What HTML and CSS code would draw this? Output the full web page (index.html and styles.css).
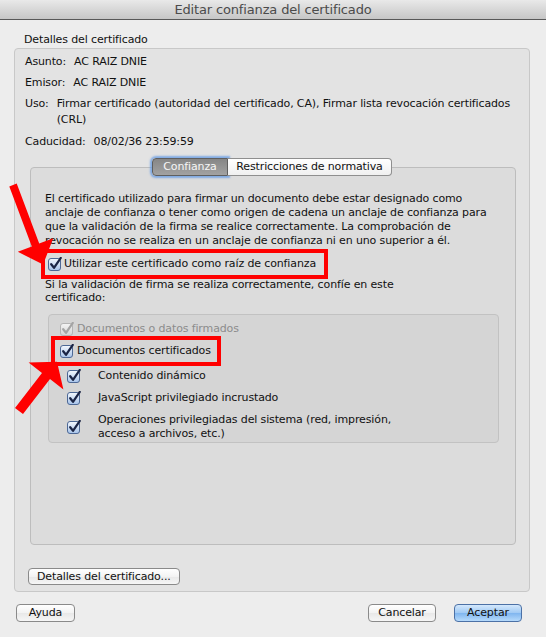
FILE: index.html
```html
<!DOCTYPE html>
<html lang="es">
<head>
<meta charset="utf-8">
<title>Editar confianza del certificado</title>
<link rel="stylesheet" href="styles.css">
</head>
<body>
<svg class="defs" aria-hidden="true">
	<defs>
		<linearGradient id="cb-blue" x1="0" y1="0" x2="0" y2="1">
			<stop offset="0" stop-color="#f4f8fd"/>
			<stop offset="1" stop-color="#a6c3ea"/>
		</linearGradient>
		<linearGradient id="cb-grey" x1="0" y1="0" x2="0" y2="1">
			<stop offset="0" stop-color="#f4f4f4"/>
			<stop offset="1" stop-color="#d4d4d4"/>
		</linearGradient>
	</defs>
	<symbol id="cb-on" viewBox="0 0 14 14">
		<rect x="0.5" y="1.5" width="12" height="12" rx="2.5" fill="url(#cb-blue)" stroke="#4d6895"/>
		<path d="M3.2 7.2 L6 10.8 L12.8 0.9" fill="none" stroke="#1a2444" stroke-width="2.2" stroke-linecap="round" stroke-linejoin="round"/>
	</symbol>
	<symbol id="cb-dis" viewBox="0 0 14 14">
		<rect x="0.5" y="1.5" width="12" height="12" rx="2.5" fill="url(#cb-grey)" stroke="#b4b4b4"/>
		<path d="M3.2 7.2 L6 10.8 L12.8 0.9" fill="none" stroke="#a4a4a4" stroke-width="2.2" stroke-linecap="round" stroke-linejoin="round"/>
	</symbol>
</svg>

<div class="window">

	<div class="titlebar">Editar confianza del certificado</div>

	<div class="group-label">Detalles del certificado</div>

	<div class="group">
		<div class="field"><span>Asunto:</span><span>AC RAIZ DNIE</span></div>
		<div class="field"><span>Emisor:</span><span>AC RAIZ DNIE</span></div>
		<div class="field wrap"><span>Uso:</span><span>Firmar certificado (autoridad del certificado, CA), Firmar lista revocación certificados (CRL)</span></div>
		<div class="field"><span>Caducidad:</span><span>08/02/36 23:59:59</span></div>

		<div class="tabs">
			<span class="tab selected">Confianza</span><span class="tab other">Restricciones de normativa</span>
		</div>

		<div class="panel">
			<p class="intro">El certificado utilizado para firmar un documento debe estar designado como anclaje de confianza o tener como origen de cadena un anclaje de confianza para que la validación de la firma se realice correctamente. La comprobación de revocación no se realiza en un anclaje de confianza ni en uno superior a él.</p>

			<div class="check root marked">
				<svg class="cb"><use href="#cb-on"/></svg>
				<span>Utilizar este certificado como raíz de confianza</span>
			</div>

			<p class="note">Si la validación de firma se realiza correctamente, confíe en este certificado:</p>

			<div class="subgroup">
				<div class="check top disabled">
					<svg class="cb"><use href="#cb-dis"/></svg>
					<span>Documentos o datos firmados</span>
				</div>
				<div class="check top marked">
					<svg class="cb"><use href="#cb-on"/></svg>
					<span>Documentos certificados</span>
				</div>
				<div class="sub">
					<svg class="cb"><use href="#cb-on"/></svg>
					<span>Contenido dinámico</span>
				</div>
				<div class="sub">
					<svg class="cb"><use href="#cb-on"/></svg>
					<span>JavaScript privilegiado incrustado</span>
				</div>
				<div class="sub">
					<svg class="cb"><use href="#cb-on"/></svg>
					<span>Operaciones privilegiadas del sistema (red, impresión, acceso a archivos, etc.)</span>
				</div>
			</div>
		</div>

		<button class="btn details">Detalles del certificado...</button>
	</div>

	<div class="footer">
		<button class="btn help">Ayuda</button>
		<span class="spacer"></span>
		<button class="btn wide">Cancelar</button>
		<button class="btn wide default">Aceptar</button>
	</div>

	<!-- red annotation arrows -->
	<svg class="annot" viewBox="0 0 546 637">
		<polygon points="16.7,183.6 39.2,243.6 53.2,238.2 43.1,264.6 17.8,251.8 31.8,246.4 9.3,186.4"/>
		<polygon points="15,407.9 42,372.9 28.6,362.6 57,361.7 63.4,389.4 50,379.1 23,414.1"/>
	</svg>
</div>
</body>
</html>
```

FILE: styles.css
```css
html
{
	background: #ededed;
}

body
{
	margin: 0;
	font-family: "DejaVu Sans", "Liberation Sans", sans-serif;
	font-size: 11px;
	letter-spacing: -0.13px;
	color: #111;
}

.defs
{
	position: absolute;
	width: 0;
	height: 0;
	overflow: hidden;
}

.window
{
	position: relative;
	width: 546px;
	height: 637px;
	background: #ededed;
}

.titlebar
{
	height: 19px;
	line-height: 19px;
	border-bottom: 1px solid #585858;
	background: linear-gradient(#e9e9e9, #c6c6c6);
	text-align: center;
	font-size: 13px;
	letter-spacing: -0.15px;
	color: #4b4b4b;
}

.group-label
{
	margin: 13px 0 1px 24px;
	line-height: 14px;
}

.group
{
	margin: 0 16px 0 14px;
	padding: 5px 0 6px;
	border: 1px solid #c8c8c8;
	border-radius: 4px;
	background: #e3e3e3;
}

.field
{
	display: flex;
	gap: 8px;
	margin: 0 10px 6px;
	line-height: 15px;
}

.field.wrap
{
	line-height: 16px;
}

/* tabs */

.tabs
{
	position: relative;
	z-index: 1;
	display: flex;
	justify-content: center;
	margin-top: 9px;
}

.tab
{
	box-sizing: border-box;
	height: 18px;
	line-height: 16px;
	text-align: center;
	border: 1px solid #8f8f8f;
	background: linear-gradient(#ffffff, #f0f0f0);
}

.tab.selected
{
	width: 76px;
	border-color: #5f5f5f;
	border-radius: 4px 0 0 4px;
	background: linear-gradient(#868686, #a2a2a2);
	color: #f6f6f6;
	box-shadow: 0 0 2px 2px rgba(96, 152, 228, 0.75);
}

.tab.other
{
	width: 164px;
	border-left: 0;
	border-radius: 0 4px 4px 0;
}

.panel
{
	position: relative;
	box-sizing: border-box;
	height: 378px;
	margin: -9px 13px 0 15px;
	padding: 24px 14px 0;
	border: 1px solid #bdbdbd;
	border-radius: 4px;
	background: #dcdcdc;
}

.intro
{
	margin: 0;
	width: 452px;
	line-height: 14px;
}

.note
{
	margin: 3px 0 0;
	width: 356px;
	line-height: 13px;
}

/* checkboxes */

.cb
{
	flex: none;
	width: 14px;
	height: 14px;
}

.check
{
	box-sizing: border-box;
	display: flex;
	align-items: center;
	width: fit-content;
	line-height: 14px;
}

.check.root
{
	height: 22px;
	margin-top: 5px;
	padding: 0 8px 0 3px;
	gap: 2px;
}

.check.top
{
	margin-left: 6px;
	padding: 0 6px 0 5px;
	gap: 3px;
}

.check.top.marked
{
	height: 22px;
	margin-top: 4px;
}

.disabled
{
	color: #8c8c8c;
}

.marked
{
	outline: 4px solid #ff0000;
}

.subgroup
{
	margin: 10px 2px 0 3px;
	padding: 7px 0 1px;
	border: 1px solid #c2c2c2;
	border-radius: 4px;
	background: #d5d5d5;
}

.sub
{
	display: flex;
	align-items: center;
	gap: 17px;
	margin-top: 8px;
	padding-left: 18px;
	line-height: 14px;
}

.check.marked + .sub
{
	margin-top: 7px;
}

.sub span
{
	max-width: 300px;
}

/* buttons */

.btn
{
	box-sizing: border-box;
	height: 18px;
	padding: 0 8px;
	font: inherit;
	letter-spacing: inherit;
	line-height: 16px;
	color: #111;
	border: 1px solid #8a8a8a;
	border-radius: 4px;
	background: linear-gradient(#ffffff, #f3f3f3 50%, #e8e8e8 51%, #f6f6f6);
}

.btn.details
{
	display: block;
	height: 17px;
	line-height: 15px;
	margin: 23px 0 0 13px;
}

.footer
{
	display: flex;
	gap: 18px;
	margin-top: 12px;
	padding: 0 24px 0 16px;
}

.spacer
{
	flex: 1;
}

.btn.help
{
	width: 59px;
}

.btn.wide
{
	width: 68px;
}

.btn.default
{
	border-color: #4c71a6;
	background: linear-gradient(#d4e8fc, #9fc9f4 50%, #7fb5ef 51%, #b6dafb);
}

.annot
{
	position: absolute;
	left: 0;
	top: 0;
	width: 546px;
	height: 637px;
	pointer-events: none;
	fill: #ff0000;
}
```
